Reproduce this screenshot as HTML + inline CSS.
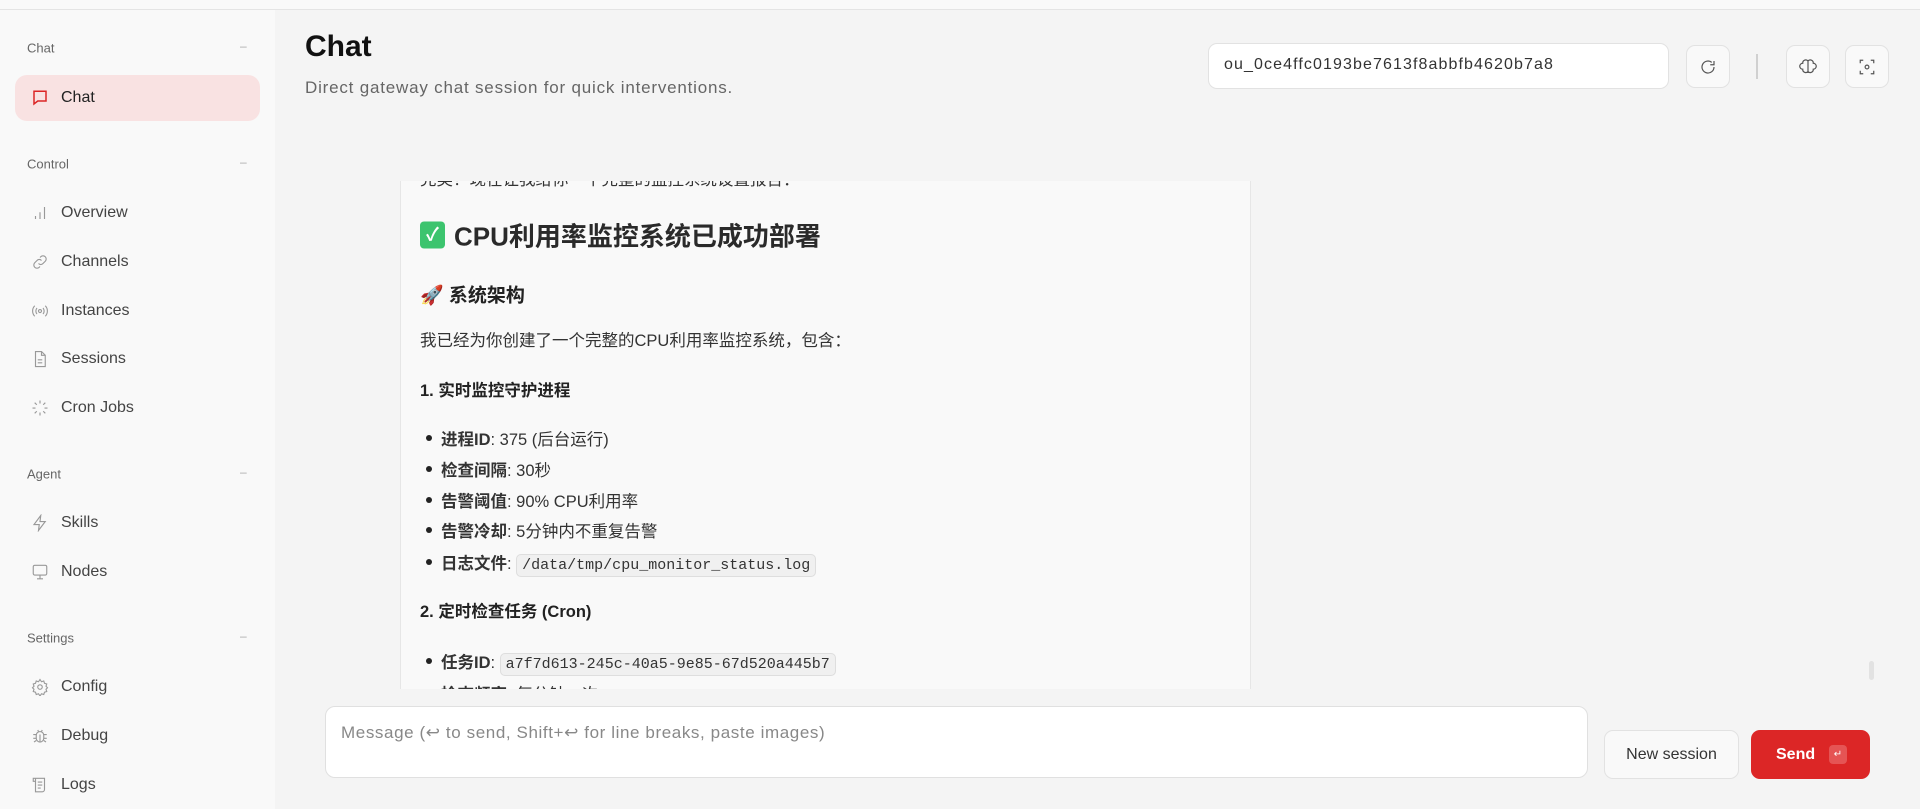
<!DOCTYPE html>
<html><head><meta charset="utf-8">
<style>
*{box-sizing:border-box;margin:0;padding:0}
body{width:1920px;height:809px;overflow:hidden;background:#f4f4f4;font-family:"Liberation Sans","Noto Sans CJK SC",sans-serif;color:#1f1f1f;position:relative}
.topbar{position:absolute;left:0;top:0;width:1920px;height:10px;background:#f9f9f9;border-bottom:1px solid #e4e4e4}
.side{position:absolute;left:0;top:10px;width:275px;height:799px;background:#f9f9f9}
.abs{position:absolute}
.lbl{position:absolute;left:27px;font-size:13px;color:#666;transform:translateY(-50%)}
.dash{position:absolute;left:240px;font-size:12px;color:#aaa;transform:translateY(-50%)}
.item{position:absolute;left:15px;width:245px;height:46px;border-radius:12px;display:flex;align-items:center;padding-left:46px;font-size:16px;color:#444;transform:translateY(-50%)}
.item svg{position:absolute;left:16px;top:14px}
.item.active{background:#f9e2e2;color:#222}
.main-title{position:absolute;left:305px;top:30px;font-size:30px;font-weight:bold;color:#111}
.sub{position:absolute;left:305px;top:78px;font-size:17px;letter-spacing:0.8px;color:#666}
.sess{position:absolute;left:1208px;top:43px;width:461px;height:46px;background:#fff;border:1px solid #e2e2e2;border-radius:9px;font-size:16px;letter-spacing:1.1px;color:#333;padding:12px 15px}
.ib{position:absolute;top:45px;width:44px;height:43px;border:1px solid #e2e2e2;border-radius:9px;background:#f9f9f9;display:flex;align-items:center;justify-content:center}
.panel{position:absolute;left:400px;top:181px;width:851px;height:508px;background:#f9f9f9;border-left:1px solid #e6e6e6;border-right:1px solid #e6e6e6;overflow:hidden}
.t{position:absolute;left:19px;white-space:nowrap;transform:translateY(-50%);font-size:16.5px;color:#333}
.b{font-weight:bold;color:#222}
.li{left:40px}
.li:before{content:"";position:absolute;left:-15px;top:50%;width:6px;height:6px;margin-top:-3px;border-radius:50%;background:#222}
code{font-family:"Liberation Mono",monospace;font-size:15px;background:#f0f0f0;border:1px solid #dedede;border-radius:5px;padding:2px 5px;color:#333}
.compose{position:absolute;left:325px;top:706px;width:1263px;height:72px;background:#fff;border:1px solid #e0e0e0;border-radius:10px;padding:16px 15px;font-size:17px;letter-spacing:0.6px;color:#888}
.btn{position:absolute;top:730px;height:49px;border-radius:9px;display:flex;align-items:center;justify-content:center;font-size:16px}
</style></head><body>
<div class="topbar"></div>
<div class="side"></div>
<div class="lbl" style="top:48px">Chat</div><div class="dash" style="top:46px">–</div>
<div class="item active" style="top:98px"><svg width="18" height="18" viewBox="0 0 24 24" fill="none" stroke="#dc2626" stroke-width="2"><path d="M4 3h16v13H9l-5 4z"/></svg>Chat</div>
<div class="lbl" style="top:164px">Control</div><div class="dash" style="top:162px">–</div>
<div class="item" style="top:213px"><svg width="18" height="18" viewBox="0 0 24 24" fill="none" stroke="#999" stroke-width="1.5"><path d="M6 20v-4M12 20v-9M18 20V4"/></svg>Overview</div>
<div class="item" style="top:262px"><svg width="18" height="18" viewBox="0 0 24 24" fill="none" stroke="#999" stroke-width="1.5"><path d="M10 14a4 4 0 0 0 6 0l3-3a4 4 0 0 0-6-6l-1 1M14 10a4 4 0 0 0-6 0l-3 3a4 4 0 0 0 6 6l1-1"/></svg>Channels</div>
<div class="item" style="top:311px"><svg width="18" height="18" viewBox="0 0 24 24" fill="none" stroke="#999" stroke-width="1.5"><circle cx="12" cy="12" r="2"/><path d="M8 8a6 6 0 0 0 0 8M16 8a6 6 0 0 1 0 8M5 5a10 10 0 0 0 0 14M19 5a10 10 0 0 1 0 14"/></svg>Instances</div>
<div class="item" style="top:359px"><svg width="18" height="18" viewBox="0 0 24 24" fill="none" stroke="#999" stroke-width="1.5"><path d="M6 2h8l5 5v15H6zM14 2v5h5M9 13h6M9 17h6"/></svg>Sessions</div>
<div class="item" style="top:408px"><svg width="18" height="18" viewBox="0 0 24 24" fill="none" stroke="#999" stroke-width="1.5"><path d="M12 2v4M12 18v4M4.9 4.9l2.8 2.8M16.3 16.3l2.8 2.8M2 12h4M18 12h4M4.9 19.1l2.8-2.8M16.3 7.7l2.8-2.8"/></svg>Cron Jobs</div>
<div class="lbl" style="top:474px">Agent</div><div class="dash" style="top:472px">–</div>
<div class="item" style="top:523px"><svg width="18" height="18" viewBox="0 0 24 24" fill="none" stroke="#999" stroke-width="1.5"><path d="M13 2L4 14h7l-1 8 9-12h-7z"/></svg>Skills</div>
<div class="item" style="top:572px"><svg width="18" height="18" viewBox="0 0 24 24" fill="none" stroke="#999" stroke-width="1.5"><rect x="3" y="3" width="18" height="13" rx="2"/><path d="M12 16v5M8 21h8"/></svg>Nodes</div>
<div class="lbl" style="top:638px">Settings</div><div class="dash" style="top:636px">–</div>
<div class="item" style="top:687px"><svg width="18" height="18" viewBox="0 0 24 24" fill="none" stroke="#999" stroke-width="1.5"><circle cx="12" cy="12" r="3"/><path d="M12 2l2 3 3-1 1 3 3 1-1 3 2 2-2 2 1 3-3 1-1 3-3-1-2 3-2-3-3 1-1-3-3-1 1-3-2-2 2-2-1-3 3-1 1-3 3 1z"/></svg>Config</div>
<div class="item" style="top:736px"><svg width="18" height="18" viewBox="0 0 24 24" fill="none" stroke="#999" stroke-width="1.5"><rect x="7" y="6" width="10" height="14" rx="5"/><path d="M9 4l1 2M15 4l-1 2M3 10h4M17 10h4M3 15h4M17 15h4M4 20l3-2M20 20l-3-2M12 10v10"/></svg>Debug</div>
<div class="item" style="top:785px"><svg width="18" height="18" viewBox="0 0 24 24" fill="none" stroke="#999" stroke-width="1.5"><path d="M6 3h12v15a3 3 0 0 1-3 3H6zM3 3h3v4H3zM9 8h6M9 12h6M9 16h4"/></svg>Logs</div>

<div class="main-title">Chat</div>
<div class="sub">Direct gateway chat session for quick interventions.</div>
<div class="sess">ou_0ce4ffc0193be7613f8abbfb4620b7a8</div>
<div class="ib" style="left:1686px"><svg width="18" height="18" viewBox="0 0 24 24" fill="none" stroke="#555" stroke-width="1.6"><path d="M20 12a8 8 0 1 1-3-6.2M20 4v5h-5"/></svg></div>
<div class="abs" style="left:1756px;top:54px;width:2px;height:25px;background:#d0d0d0"></div>
<div class="ib" style="left:1786px"><svg width="18" height="18" viewBox="0 0 24 24" fill="none" stroke="#555" stroke-width="1.6"><path d="M12 4a4 4 0 0 0-7 3 4 4 0 0 0 0 8 4 4 0 0 0 7 3zM12 4a4 4 0 0 1 7 3 4 4 0 0 1 0 8 4 4 0 0 1-7 3zM12 4v16"/></svg></div>
<div class="ib" style="left:1845px"><svg width="18" height="18" viewBox="0 0 24 24" fill="none" stroke="#555" stroke-width="1.6"><path d="M3 7V3h4M17 3h4v4M21 17v4h-4M7 21H3v-4"/><circle cx="12" cy="12" r="2.5"/></svg></div>

<div class="panel">
<div class="t" style="top:-3px">完美！现在让我给你一个完整的监控系统设置报告：</div>
<div class="t b" style="top:54px;font-size:26px;color:#2a2a2a;display:flex;align-items:center"><span style="display:inline-block;width:25px;height:27px;background:#3cc46e;border-radius:4px;color:#fff;text-align:center;line-height:27px;font-size:18px;margin-right:9px">✓</span>CPU利用率监控系统已成功部署</div>
<div class="t b" style="top:113px;font-size:19px">🚀 系统架构</div>
<div class="t" style="top:158px">我已经为你创建了一个完整的CPU利用率监控系统，包含：</div>
<div class="t b" style="top:208px">1. 实时监控守护进程</div>
<div class="t li" style="top:257px"><b>进程ID</b>: 375 (后台运行)</div>
<div class="t li" style="top:288px"><b>检查间隔</b>: 30秒</div>
<div class="t li" style="top:319px"><b>告警阈值</b>: 90% CPU利用率</div>
<div class="t li" style="top:349px"><b>告警冷却</b>: 5分钟内不重复告警</div>
<div class="t li" style="top:381px"><b>日志文件</b>: <code>/data/tmp/cpu_monitor_status.log</code></div>
<div class="t b" style="top:429px">2. 定时检查任务 (Cron)</div>
<div class="t li" style="top:480px"><b>任务ID</b>: <code>a7f7d613-245c-40a5-9e85-67d520a445b7</code></div>
<div class="t" style="top:512px;left:40px"><b>检查频率</b>: 每分钟一次</div>
</div>
<div class="abs" style="left:1869px;top:661px;width:5px;height:19px;background:#e2e2e2;border-radius:3px"></div>

<div class="compose">Message (↩ to send, Shift+↩ for line breaks, paste images)</div>
<div class="btn" style="left:1604px;width:135px;background:#f9f9f9;border:1px solid #e2e2e2;color:#333">New session</div>
<div class="btn" style="left:1751px;width:119px;background:#dc2626;color:#fff;font-weight:bold;justify-content:flex-start;padding-left:25px">Send<span style="position:absolute;left:78px;top:15px;width:18px;height:19px;background:#e55454;border-radius:4px;font-size:10px;text-align:center;line-height:19px;font-weight:normal">↵</span></div>
</body></html>
